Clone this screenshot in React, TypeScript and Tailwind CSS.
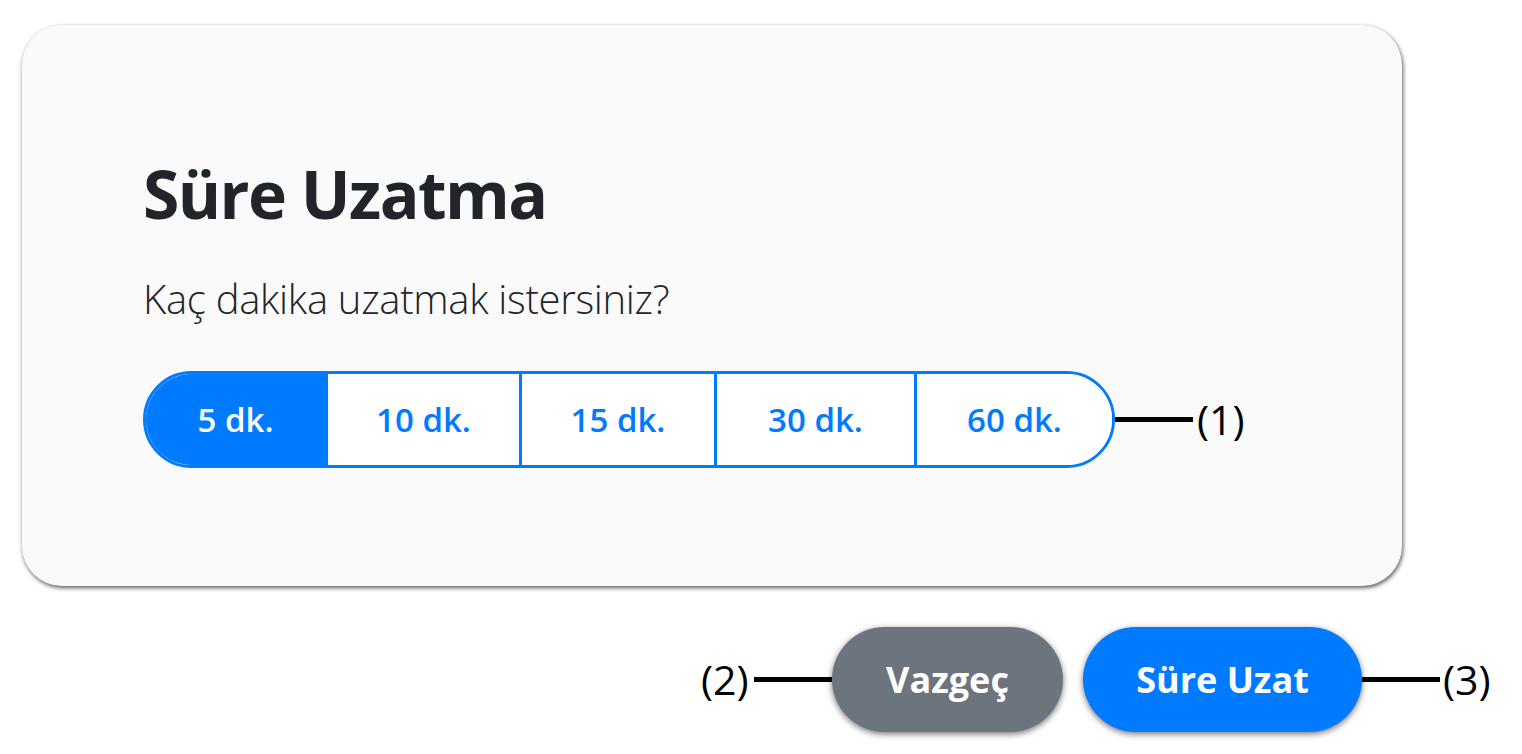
import React from "react";

const font = { fontFamily: '"Open Sans", "Noto Sans", sans-serif' };

export default function App() {
  const segs = [
    { label: "5 dk.", w: "w-[179px]", active: true },
    { label: "10 dk.", w: "w-[194px]" },
    { label: "15 dk.", w: "w-[195px]" },
    { label: "30 dk.", w: "w-[200px]" },
    { label: "60 dk.", w: "w-[198px]" },
  ];
  return (
    <div className="w-[1522px] h-[754px] bg-white overflow-hidden" style={font}>
      <div className="pl-[22px] pt-[25px]">
        <div className="w-[1380px] h-[561px] rounded-[40px] bg-[#fafafa] shadow-[1px_2px_4px_rgba(0,0,0,0.65)] pl-[121px] pt-[135px] flex flex-col">
          <h1 className="text-[66px] leading-none font-bold text-[#212529] tracking-[-1.6px]">Süre Uzatma</h1>
          <p className="mt-[53px] text-[40px] leading-none font-light text-[#212529] tracking-[-0.3px]">
            Kaç dakika uzatmak istersiniz?
          </p>
          <div className="mt-[52px] flex items-center">
            <div className="flex h-[97px] w-[972px] border-[3px] border-[#007bff] rounded-full overflow-hidden bg-white">
              {segs.map((s, i) => (
                <div
                  key={s.label}
                  className={
                    s.w +
                    " h-full flex items-center justify-center text-[33px] font-semibold " +
                    (i > 0 ? "border-l-[3px] border-[#007bff] " : "") +
                    (s.active ? "bg-[#007bff] text-white" : "bg-white text-[#007bff]")
                  }
                >
                  {s.label}
                </div>
              ))}
            </div>
            <div className="w-[78px] h-[5px] bg-black" />
            <span className="ml-[4px] text-[41px] leading-none text-black">(1)</span>
          </div>
        </div>
      </div>
      <div className="mt-[41px] flex items-center pl-[701px]">
        <span className="w-[53px] text-[41px] leading-none text-black">(2)</span>
        <div className="w-[78px] h-[5px] bg-black" />
        <button className="w-[231px] h-[105px] rounded-full bg-[#6c757d] text-white text-[36px] font-bold shadow-[0_2px_6px_rgba(0,0,0,0.55)]">
          Vazgeç
        </button>
        <button className="ml-[20px] w-[279px] h-[105px] rounded-full bg-[#007bff] text-white text-[36px] font-bold shadow-[0_2px_6px_rgba(0,0,0,0.55)]">
          Süre Uzat
        </button>
        <div className="w-[78px] h-[5px] bg-black" />
        <span className="ml-[3px] text-[41px] leading-none text-black">(3)</span>
      </div>
    </div>
  );
}
